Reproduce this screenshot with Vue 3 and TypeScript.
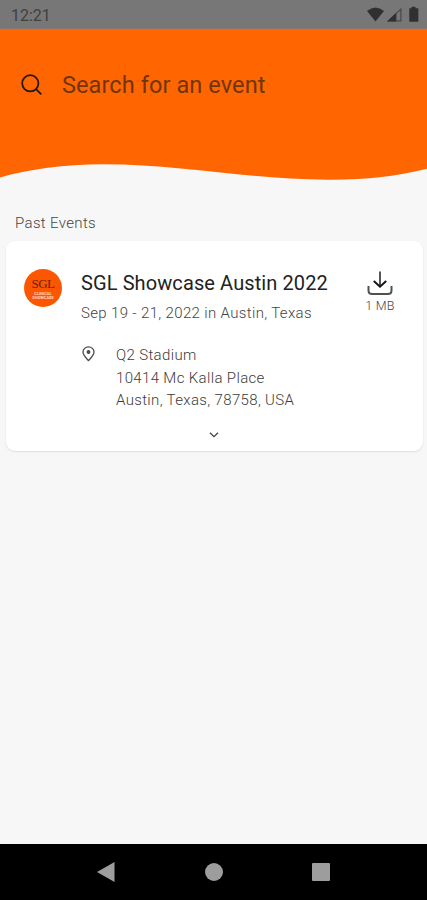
<script setup lang="ts">
interface EventItem {
  title: string
  when: string
  size: string
  address: string[]
}

const events: EventItem[] = [
  {
    title: 'SGL Showcase Austin 2022',
    when: 'Sep 19 - 21, 2022 in Austin, Texas',
    size: '1 MB',
    address: ['Q2 Stadium', '10414 Mc Kalla Place', 'Austin, Texas, 78758, USA'],
  },
]
</script>

<template>
  <div class="screen">
    <div class="status">
      <span class="clock">12:21</span>
      <svg class="status-icons" width="54" height="18" viewBox="0 0 54 18" fill="#303030">
        <path d="M0 5Q8.500 -2 17 5L8.500 15.500Z" />
        <path d="M20 15.500L34.500 1.800V15.500Z" fill="#484848" />
        <path d="M20 15.500L29 7V15.500Z" />
        <path d="M29.600 7.800L33.300 4.500V14.300H29.600Z" fill="#777" />
        <path d="M44.500 .8H48.500V2.300H51.300V15.700H42.300V2.300H44.500Z" />
      </svg>
    </div>

    <header class="hero">
      <label class="search">
        <svg width="22" height="22" viewBox="0 0 22 22" fill="none" stroke="#21150c" stroke-width="1.700" stroke-linecap="round">
          <circle cx="9.300" cy="9.300" r="8.100" />
          <path d="M15.300 15.300L19.800 19.800" />
        </svg>
        <span class="placeholder">Search for an event</span>
      </label>
    </header>
    <svg class="wave" width="427" height="42" viewBox="0 0 427 42">
      <path d="M0 0H427V28.800C397 36.500 364 40 328 39.700C247 39.500 182 24.300 103 24.300C65 24.300 28 29.500 0 37.500Z" fill="#ff6500" />
    </svg>

    <main class="content">
      <h2 class="section">Past Events</h2>
      <article v-for="event in events" :key="event.title" class="card">
        <div class="card-top">
          <div class="logo">
            <span class="logo-name">SGL</span>
            <span class="logo-line">CLINICAL</span>
            <span class="logo-line">SHOWCASE</span>
          </div>
          <div class="summary">
            <h3 class="title">{{ event.title }}</h3>
            <p class="when">{{ event.when }}</p>
          </div>
          <div class="download">
            <svg width="26" height="25" viewBox="0 0 26 25" fill="none" stroke="#505050" stroke-width="2">
              <path d="M13 .5V15.500" stroke="#555" />
              <path d="M6.800 10L13 15.700L19.200 10" stroke="#151515" />
              <path d="M1.500 15V19.500Q1.500 23 5 23H21Q24.500 23 24.500 19.500V15" />
            </svg>
            <span class="size">{{ event.size }}</span>
          </div>
        </div>
        <div class="place">
          <svg class="pin" width="13" height="16" viewBox="0 0 13 16" fill="none" stroke="#4c4c4c" stroke-width="1.300">
            <path d="M6.500 14.600C4 11.700 1 9.200 1 6A5.500 5.100 0 0 1 12 6C12 9.200 9 11.700 6.500 14.600Z" />
            <circle cx="6.500" cy="6" r="1.300" fill="#4c4c4c" />
          </svg>
          <address class="address">
            <span v-for="line in event.address" :key="line">{{ line }}</span>
          </address>
        </div>
        <svg class="chevron" width="10" height="6" viewBox="0 0 10 6" fill="none" stroke="#444" stroke-width="1.300">
          <path d="M1 .8L5 4.700L9 .8" />
        </svg>
      </article>
    </main>

    <nav class="navbar">
      <svg width="427" height="56" viewBox="0 0 427 56" fill="#9d9d9d">
        <path d="M97 28L114.500 18V38Z" />
        <circle cx="214" cy="28" r="9" />
        <rect x="312" y="19" width="18" height="18" rx="1" />
      </svg>
    </nav>
  </div>
</template>

<style>
body {
  margin: 0;
}
</style>

<style scoped>
.screen {
  width: 427px;
  height: 900px;
  display: flex;
  flex-direction: column;
  overflow: hidden;
  background: #f7f7f7;
  font-family: Roboto, sans-serif;
}
svg {
  display: block;
  flex: none;
}
h2,
h3,
p {
  margin: 0;
  font-weight: 400;
}
.status {
  height: 29px;
  box-sizing: border-box;
  padding: 6px 6px 0 11px;
  display: flex;
  justify-content: space-between;
  background: #777;
  border-bottom: 1px solid #867568;
}
.clock {
  font-size: 16px;
  line-height: 19px;
  color: #404040;
}
.hero {
  height: 111px;
  box-sizing: border-box;
  padding: 40px 21px 0;
  background: #ff6500;
}
.search {
  display: flex;
  align-items: center;
  gap: 19px;
  height: 32px;
}
.placeholder {
  font-size: 23.5px;
  line-height: 30px;
  letter-spacing: 0.1px;
  white-space: nowrap;
  color: #70350b;
}
.wave {
  width: 100%;
}
.content {
  flex: 1;
  padding: 31px 4px 0 6px;
}
.section {
  height: 28px;
  padding-left: 9px;
  font-size: 15px;
  font-weight: 300;
  letter-spacing: 0.35px;
  line-height: 20px;
  color: #444;
}
.card {
  height: 210px;
  box-sizing: border-box;
  padding: 28px 0 0 18px;
  border-radius: 9px;
  background: #fff;
  box-shadow: 0 1px 2px rgba(0, 0, 0, 0.1);
}
.card-top {
  display: flex;
  height: 76px;
}
.logo {
  width: 38px;
  height: 38px;
  flex: none;
  box-sizing: border-box;
  padding-top: 7px;
  border-radius: 50%;
  background: #fc5600;
  display: flex;
  flex-direction: column;
  align-items: center;
}
.logo-name {
  font: 13px/16px 'Liberation Serif', serif;
  letter-spacing: -0.5px;
  color: #682300;
}
.logo-line {
  font-size: 4px;
  line-height: 3.500px;
  font-weight: 700;
  color: #ffd8c2;
}
.summary {
  width: 270px;
  margin-left: 19px;
  white-space: nowrap;
}
.title {
  font-size: 20px;
  line-height: 28px;
  letter-spacing: 0.1px;
  color: #222;
}
.when {
  margin-top: 6px;
  font-size: 15px;
  font-weight: 300;
  letter-spacing: 0.35px;
  line-height: 20px;
  color: #444;
}
.download {
  width: 58px;
  display: flex;
  flex-direction: column;
  align-items: center;
  padding-top: 2px;
}
.size {
  margin-top: 3px;
  font-size: 12.500px;
  font-weight: 300;
  line-height: 14px;
  letter-spacing: 0.3px;
  color: #444;
}
.place {
  display: flex;
  padding-left: 58px;
}
.pin {
  margin-top: 1px;
}
.address {
  display: flex;
  flex-direction: column;
  margin: -1px 0 0 21px;
  font-size: 15px;
  font-weight: 300;
  letter-spacing: 0.35px;
  line-height: 22.5px;
  font-style: normal;
  color: #3c3c3c;
}
.chevron {
  margin: 20px 0 0 185px;
}
.navbar {
  height: 56px;
  box-sizing: border-box;
  background: #000;
}
</style>
